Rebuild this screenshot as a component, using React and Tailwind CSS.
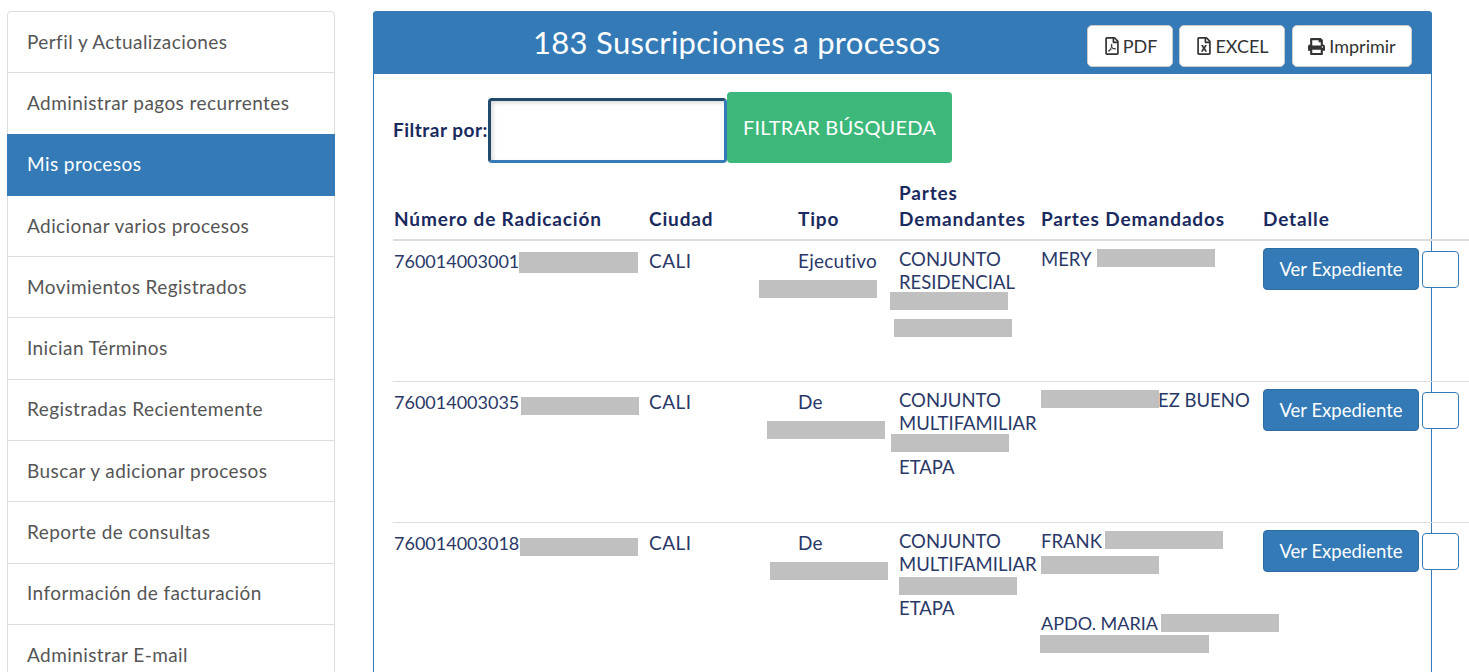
import { FaRegFilePdf, FaRegFileExcel, FaPrint } from "react-icons/fa";

const menu = [
  "Perfil y Actualizaciones",
  "Administrar pagos recurrentes",
  "Mis procesos",
  "Adicionar varios procesos",
  "Movimientos Registrados",
  "Inician Términos",
  "Registradas Recientemente",
  "Buscar y adicionar procesos",
  "Reporte de consultas",
  "Información de facturación",
  "Administrar E-mail",
];

function Gray({ className }) {
  return <span className={`block shrink-0 bg-[#c0c0c0] ${className}`} />;
}

function Row({ numero, numeroGray, tipo, demandante, demandado }) {
  return (
    <div className="flex h-[141px] border-b border-[#ddd] last:border-b-0 text-[19px] text-[#2a3868] whitespace-nowrap">
      <div className="w-[256px] pl-px pt-[9px] flex items-start text-[18px]">
        <span className="w-[125px] shrink-0">{numero}</span>
        {numeroGray}
      </div>
      <div className="w-[149px] pt-[9px] tracking-[0.5px]">CALI</div>
      <div className="w-[101px] pt-[9px] tracking-[0.25px]">{tipo}</div>
      <div className="w-[142px] pt-[7px] text-[18.5px] leading-[23px]">{demandante}</div>
      <div className="w-[222px] pt-[7px] text-[18.5px]">{demandado}</div>
      <div className="pt-[7px] flex items-start">
        <button className="w-[156px] h-[42px] pb-px rounded bg-[#337ab7] border border-[#2e6da4] text-white text-[18.5px]">
          Ver Expediente
        </button>
        <span className="block ml-[3px] mt-[3px] w-[37px] h-[37px] bg-white border border-[#337ab7] rounded" />
      </div>
    </div>
  );
}

export default function App() {
  return (
    <div className="h-[672px] overflow-hidden bg-white flex items-start font-['Lato','Open_Sans',sans-serif] text-[18px] leading-[22px] text-[#2c3e50]">
      <nav className="ml-[7px] mt-[11px] w-[328px] shrink-0 flex flex-col text-[19px] tracking-[0.42px]">
        {menu.map((item, i) => (
          <a
            key={item}
            className={
              i === 2
                ? "h-[62.3px] -mt-px pb-px z-10 flex items-center px-5 bg-[#337ab7] text-white"
                : "h-[62.3px] -mt-px pb-px first:mt-0 flex items-center px-[19px] border border-[#ddd] first:rounded-t text-[#555]"
            }
          >
            {item}
          </a>
        ))}
      </nav>

      <main className="ml-[38px] mt-[11px] w-[1059px] shrink-0 border-x border-[#337ab7] rounded-t min-h-[700px]">
        <header className="-mx-px h-[63px] bg-[#337ab7] rounded-t flex items-start pt-[14px] pl-[160px] pr-5 text-white">
          <h1 className="-mt-px text-[31px] leading-[36px] flex-1 font-normal tracking-[0.3px]">183 Suscripciones a procesos</h1>
          <div className="flex text-[#333] text-[18px]">
            <button className="h-[42px] w-[86px] bg-white border border-[#ccc] rounded-[5px] flex items-center justify-center gap-0.5">
              <FaRegFilePdf size={18} /> PDF
            </button>
            <button className="ml-[6px] h-[42px] w-[106px] bg-white border border-[#ccc] rounded-[5px] flex items-center justify-center gap-0.5">
              <FaRegFileExcel size={18} /> EXCEL
            </button>
            <button className="ml-[7px] h-[42px] w-[120px] bg-white border border-[#ccc] rounded-[5px] flex items-center justify-center gap-1">
              <FaPrint size={17} /> Imprimir
            </button>
          </div>
        </header>

        <div className="pl-[19px] w-[1095px]">
          <div className="flex items-start pt-[18px] h-[107px]">
            <label className="font-bold text-[19px] tracking-[0.5px] text-[#1a2a5e] mt-[27px]">Filtrar por:</label>
            <input className="w-[239px] h-[65px] mt-[6px] border-[3px] border-[#337ab7] border-l-[#23496b] border-t-[#23496b] rounded shadow-[inset_2px_2px_4px_rgba(0,0,0,0.15)] outline-none" />
            <button className="w-[225px] h-[71px] pb-0.5 bg-[#3cb87a] text-white text-[20px] tracking-[0.2px] rounded">
              FILTRAR BÚSQUEDA
            </button>
          </div>

          <div className="flex h-[60px] items-end pb-[7px] border-b-2 border-[#ddd] font-bold text-[19px] leading-[26px] tracking-[0.85px] text-[#1a2a5e]">
            <div className="w-[256px] pl-px">Número de Radicación</div>
            <div className="w-[149px]">Ciudad</div>
            <div className="w-[101px]">Tipo</div>
            <div className="w-[142px]">Partes<br />Demandantes</div>
            <div className="w-[222px]">Partes Demandados</div>
            <div>Detalle</div>
          </div>

          <Row
            numero="760014003001"
            numeroGray={<Gray className="w-[119px] h-[21px] mt-[2px]" />}
            tipo={
              <>
                Ejecutivo
                <Gray className="w-[118px] h-[18px] -ml-[39px] mt-[8px]" />
              </>
            }
            demandante={
              <>
                CONJUNTO
                <br />
                RESIDENCIAL
                <Gray className="w-[118px] h-[18px] -ml-[9px] -mt-[2px]" />
                <Gray className="w-[118px] h-[18px] -ml-[5px] mt-[9px]" />
              </>
            }
            demandado={
              <span className="flex items-start">
                MERY
                <Gray className="w-[118px] h-[18px] ml-[5px] mt-px" />
              </span>
            }
          />
          <Row
            numero="760014003035"
            numeroGray={<Gray className="w-[118px] h-[18px] mt-[6px] ml-[2px]" />}
            tipo={
              <>
                De
                <Gray className="w-[118px] h-[18px] -ml-[31px] mt-[8px]" />
              </>
            }
            demandante={
              <>
                CONJUNTO
                <br />
                MULTIFAMILIAR
                <Gray className="w-[118px] h-[18px] -ml-[8px] -mt-px" />
                <span className="block mt-[4px]">ETAPA</span>
              </>
            }
            demandado={
              <span className="flex items-start">
                <Gray className="w-[118px] h-[18px] -mr-px mt-px" />
                EZ BUENO
              </span>
            }
          />
          <Row
            numero="760014003018"
            numeroGray={<Gray className="w-[118px] h-[18px] mt-[6px] ml-px" />}
            tipo={
              <>
                De
                <Gray className="w-[118px] h-[18px] -ml-[28px] mt-[8px]" />
              </>
            }
            demandante={
              <>
                CONJUNTO
                <br />
                MULTIFAMILIAR
                <Gray className="w-[118px] h-[18px] mt-px" />
                <span className="block mt-[2px]">ETAPA</span>
              </>
            }
            demandado={
              <>
                <span className="flex items-start">
                  <span className="w-[64px] shrink-0">FRANK</span>
                  <Gray className="w-[118px] h-[18px] mt-px" />
                </span>
                <Gray className="w-[118px] h-[18px] mt-[4px]" />
                <span className="flex items-start mt-[38px] text-[18px]">
                  <span className="w-[120px] shrink-0">APDO. MARIA</span>
                  <Gray className="w-[118px] h-[18px] mt-[2px]" />
                </span>
                <Gray className="w-[169px] h-[18px] -ml-px mt-px" />
              </>
            }
          />
        </div>
      </main>
    </div>
  );
}
